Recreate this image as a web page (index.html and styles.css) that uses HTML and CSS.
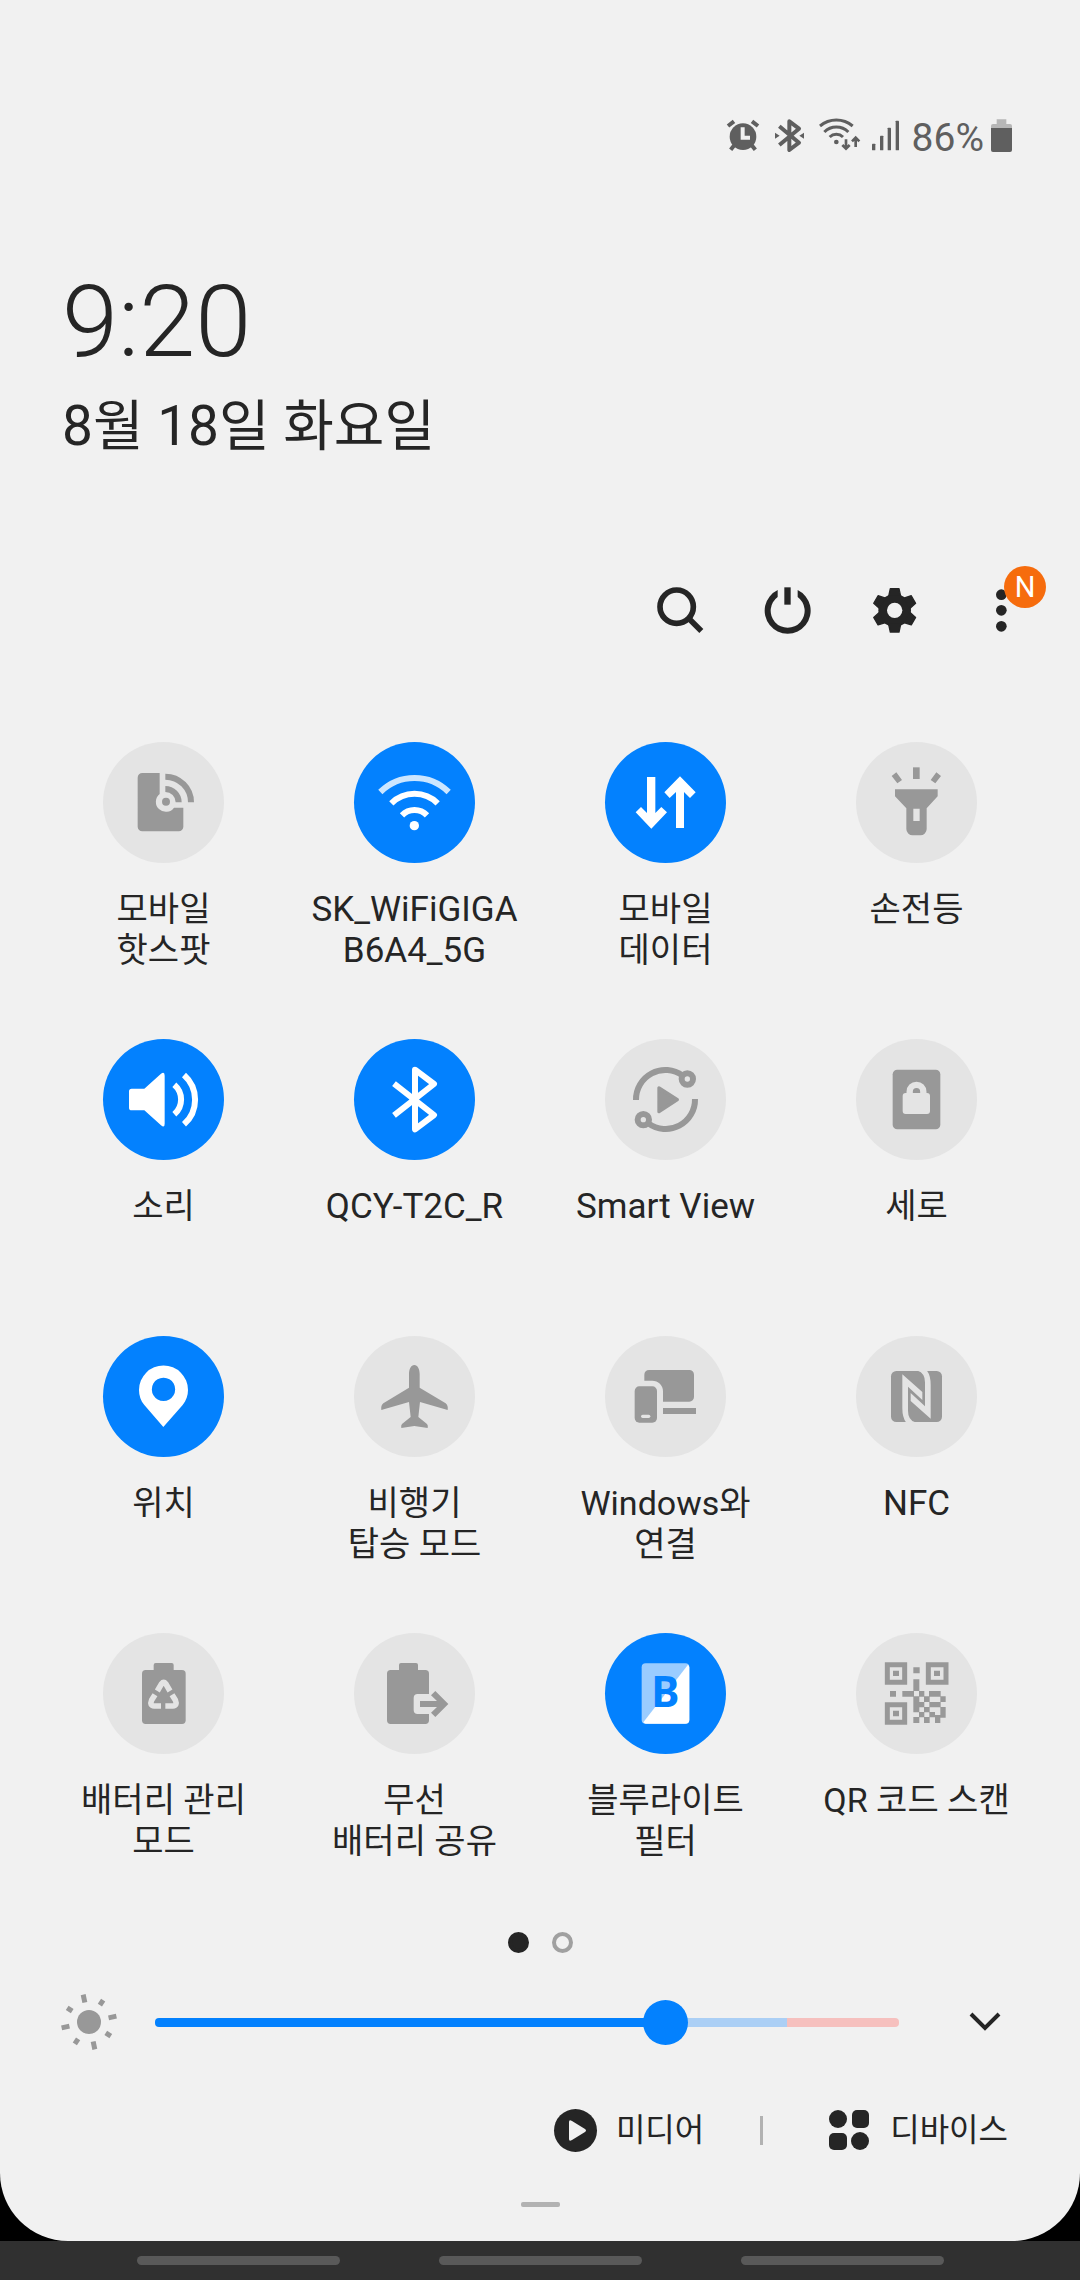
FILE: index.html
```html
<!DOCTYPE html>
<html lang="ko">
<head>
<meta charset="utf-8">
<meta name="viewport" content="width=device-width, initial-scale=1">
<title>빠른 설정</title>
<link rel="stylesheet" href="styles.css">
</head>
<body>
<main class="panel">
  <div class="status">
    <svg class="status-icon" width="34" height="35" viewBox="81 84 102 105" aria-hidden="true">
      <circle cx="129" cy="140" r="40"/>
      <path class="line" stroke-width="12" d="M84 108L102 94M156 94L174 108"/>
      <path class="line" stroke-width="12" d="M104 164L92 179M154 164L166 179"/>
      <path class="cut-line" stroke-width="12" d="M128 112V143H150"/>
    </svg>
    <svg class="status-icon" width="34" height="35" viewBox="219 84 102 105" aria-hidden="true">
      <path class="line" stroke-width="12" stroke-linejoin="round" d="M238 109L297 158L268 180V94L297 116L238 165"/>
      <path d="M225 128L239 137L225 146ZM312 128L298 137L312 146Z"/>
    </svg>
    <svg class="status-icon" width="42" height="35" viewBox="357 84 126 105" aria-hidden="true">
      <circle cx="409" cy="156" r="7"/>
      <path class="line" stroke-width="9" d="M389 141A29 29 0 0 1 429 141M373 126A51 51 0 0 1 445 126M360 108A76 76 0 0 1 458 108"/>
      <path class="line" stroke-width="8" d="M438 148V176M427 165L438 176L449 165M467 171V143M456 154L467 143L478 154"/>
    </svg>
    <svg class="status-icon" width="27" height="35" viewBox="519 84 81 105" aria-hidden="true">
      <rect x="516" y="161" width="10" height="20" rx="2"/>
      <rect x="540" y="137" width="10" height="44" rx="2"/>
      <rect x="563" y="113" width="10" height="68" rx="2"/>
      <rect x="587" y="92" width="10" height="89" rx="2"/>
    </svg>
    <span class="battery-level">86%</span>
    <svg class="battery" width="21" height="35" viewBox="873 84 63 105" aria-hidden="true">
      <path fill="#b7b7b7" d="M890 88H919V102H930Q936 102 936 108V120H873V108Q873 102 879 102H890Z"/>
      <path d="M873 114H936V180Q936 186 930 186H879Q873 186 873 180Z"/>
    </svg>
  </div>

  <header class="clock">
    <time class="time">9:20</time>
    <p class="date">8월 18일 화요일</p>
  </header>

  <div class="toolbar">
    <button class="tool" type="button" aria-label="검색">
      <svg width="48" height="48" viewBox="111 138 144 144">
        <circle class="line" cx="170" cy="200" r="50" stroke-width="17"/>
        <path class="line" stroke-width="17" d="M205 234L244 273"/>
      </svg>
    </button>
    <button class="tool" type="button" aria-label="전원">
      <svg width="48" height="48" viewBox="432 138 144 144">
        <path d="M533 150A69 69 0 1 1 473 150V171A51 51 0 1 0 533 171Z"/>
        <rect x="493" y="142" width="19" height="52"/>
      </svg>
    </button>
    <button class="tool" type="button" aria-label="설정">
      <svg width="48" height="48" viewBox="753 138 144 144">
        <circle cx="824" cy="211" r="49"/>
        <g stroke="currentColor" stroke-width="4" stroke-linejoin="round">
          <path d="M811 146H837L842 169H806ZM811 276H837L842 253H806Z"/>
          <path transform="rotate(60 824 211)" d="M811 146H837L842 169H806ZM811 276H837L842 253H806Z"/>
          <path transform="rotate(120 824 211)" d="M811 146H837L842 169H806ZM811 276H837L842 253H806Z"/>
        </g>
        <circle class="cut" cx="824" cy="211" r="23"/>
      </svg>
    </button>
    <button class="tool" type="button" aria-label="더보기">
      <svg width="48" height="48" viewBox="1074 138 144 144">
        <circle cx="1144" cy="164" r="16"/>
        <circle cx="1144" cy="211" r="16"/>
        <circle cx="1144" cy="259" r="16"/>
      </svg>
      <span class="badge">N</span>
    </button>
  </div>

  <section class="tiles" aria-label="빠른 설정">
    <button class="tile" type="button" aria-pressed="false">
      <svg class="tile-icon" viewBox="129 66 363 363" aria-hidden="true">
        <path d="M247 159H299V222A30 30 0 1 0 342 263H370V320A14 14 0 0 1 356 334H247A14 14 0 0 1 233 320V173A14 14 0 0 1 247 159Z"/>
        <circle cx="318" cy="245" r="12"/>
        <path class="line" stroke-width="18" d="M316 207A40 40 0 0 1 356 247M316 170A77 77 0 0 1 393 247"/>
      </svg>
      <span class="label">모바일<br>핫스팟</span>
    </button>
    <button class="tile" type="button" aria-pressed="true">
      <svg class="tile-icon" viewBox="882 66 363 363" aria-hidden="true">
        <circle cx="1063" cy="317" r="14"/>
        <path class="line" stroke-width="18" d="M1026 286A52 52 0 0 1 1101 286M994 250A98 98 0 0 1 1133 250"/>
        <path class="line" stroke-width="18" opacity=".8" d="M961 216A146 146 0 0 1 1166 216"/>
      </svg>
      <span class="label latin">SK_WiFiGIGA<br>B6A4_5G</span>
    </button>
    <button class="tile" type="button" aria-pressed="true">
      <svg class="tile-icon" viewBox="135 66 363 363" aria-hidden="true">
        <path d="M261 171H286V279L304 261L321 277L274 326L227 277L243 261L261 279Z"/>
        <path d="M348 324H372V216L390 234L407 217L360 169L313 217L329 234L348 216Z"/>
      </svg>
      <span class="label">모바일<br>데이터</span>
    </button>
    <button class="tile" type="button" aria-pressed="false">
      <svg class="tile-icon" viewBox="888 66 363 363" aria-hidden="true">
        <rect x="1059" y="142" width="20" height="35"/>
        <path d="M995 168L1009 157L1026 180L1012 190ZM1129 157L1143 168L1126 190L1112 180Z"/>
        <path fill-rule="evenodd" d="M1005 208H1133V229L1100 265V327A19 19 0 0 1 1081 346H1058A19 19 0 0 1 1039 327V265L1005 229ZM1060 266V303H1079V266Z"/>
      </svg>
      <span class="label">손전등</span>
    </button>

    <button class="tile" type="button" aria-pressed="true">
      <svg class="tile-icon" viewBox="129 57 363 363" aria-hidden="true">
        <path d="M215 206H253L303 161Q314 153 314 167V311Q314 325 303 316L253 271H215Q207 271 207 263V214Q207 206 215 206Z"/>
        <path class="line" stroke-width="18" d="M343 194A59 59 0 0 1 343 283M372 165A99 99 0 0 1 372 313"/>
      </svg>
      <span class="label">소리</span>
    </button>
    <button class="tile" type="button" aria-pressed="true">
      <svg class="tile-icon" viewBox="882 57 363 363" aria-hidden="true">
        <path class="line" stroke-width="18" stroke-linejoin="round" d="M1002 191L1122 285L1065 328V149L1122 192L1002 286"/>
      </svg>
      <span class="label latin">QCY-T2C_R</span>
    </button>
    <button class="tile" type="button" aria-pressed="false">
      <svg class="tile-icon" viewBox="135 57 363 363" aria-hidden="true">
        <path class="line" stroke-width="18" d="M228 240A88 88 0 0 1 368 167M405 237A88 88 0 0 1 265 310"/>
        <circle class="line" cx="382" cy="177" r="17" stroke-width="18"/>
        <circle class="line" cx="250" cy="299" r="17" stroke-width="18"/>
        <path stroke="currentColor" stroke-width="10" stroke-linejoin="round" d="M297 204V275L352 239Z"/>
      </svg>
      <span class="label latin">Smart View</span>
    </button>
    <button class="tile" type="button" aria-pressed="false">
      <svg class="tile-icon" viewBox="888 57 363 363" aria-hidden="true">
        <rect x="998" y="149" width="143" height="179" rx="14"/>
        <rect class="cut" x="1028" y="219" width="82" height="63" rx="9"/>
        <path class="cut-line" stroke-width="19" d="M1049 222V215A20 20 0 0 1 1090 215V222"/>
      </svg>
      <span class="label">세로</span>
    </button>

    <button class="tile" type="button" aria-pressed="true">
      <svg class="tile-icon" viewBox="129 48 363 363" aria-hidden="true">
        <path fill-rule="evenodd" d="M310 321L253 255C242 243 237 226 237 210A73 73 0 0 1 384 210C384 226 379 242 368 255ZM310 173A35 35 0 1 0 311 173Z"/>
      </svg>
      <span class="label">위치</span>
    </button>
    <button class="tile" type="button" aria-pressed="false">
      <svg class="tile-icon" viewBox="882 48 363 363" aria-hidden="true">
        <path d="M1063 135C1073 135 1079 148 1079 162V203L1157 250Q1165 256 1163 270L1080 246L1075 291L1101 312Q1105 316 1103 324L1063 318L1024 324Q1022 316 1026 312L1052 291L1047 246L964 270Q962 256 970 250L1047 203V162C1047 148 1053 135 1063 135Z"/>
      </svg>
      <span class="label">비행기<br>탑승 모드</span>
    </button>
    <button class="tile" type="button" aria-pressed="false">
      <svg class="tile-icon" viewBox="135 48 363 363" aria-hidden="true">
        <path d="M267 150H388A14 14 0 0 1 402 164V231A14 14 0 0 1 388 245H309V214A32 32 0 0 0 277 182H253V164A14 14 0 0 1 267 150Z"/>
        <rect x="309" y="264" width="99" height="18"/>
        <rect x="224" y="199" width="67" height="109" rx="14"/>
        <rect class="cut" x="243" y="284" width="28" height="10" rx="5"/>
      </svg>
      <span class="label">Windows와<br>연결</span>
    </button>
    <button class="tile" type="button" aria-pressed="false">
      <svg class="tile-icon" viewBox="888 48 363 363" aria-hidden="true">
        <rect x="993" y="153" width="153" height="153" rx="16"/>
        <path class="cut" d="M1027 163L1087 216V240L1044 200V272Q1044 300 1066 307H1038Q1027 292 1027 265Z"/>
        <path class="cut" transform="rotate(180 1069.5 229.5)" d="M1027 163L1087 216V240L1044 200V272Q1044 300 1066 307H1038Q1027 292 1027 265Z"/>
      </svg>
      <span class="label latin">NFC</span>
    </button>

    <button class="tile" type="button" aria-pressed="false">
      <svg class="tile-icon" viewBox="129 39 363 363" aria-hidden="true">
        <rect x="281" y="129" width="60" height="40" rx="6"/>
        <rect x="246" y="150" width="131" height="162" rx="11"/>
        <path class="cut-line" stroke-width="17" d="M292 213L305 191Q311 183 317 191L330 213M285 224L275 240Q268 257 283 258H303M336 224L346 240Q353 257 338 258H316"/>
      </svg>
      <span class="label">배터리 관리<br>모드</span>
    </button>
    <button class="tile" type="button" aria-pressed="false">
      <svg class="tile-icon" viewBox="882 39 363 363" aria-hidden="true">
        <rect x="1017" y="129" width="57" height="40" rx="6"/>
        <path d="M992 150H1096A11 11 0 0 1 1107 161V222H1073A12 12 0 0 0 1061 234V270A12 12 0 0 0 1073 282H1107V301A11 11 0 0 1 1096 312H992A11 11 0 0 1 981 301V161A11 11 0 0 1 992 150Z"/>
        <path d="M1080 243H1131L1113 226L1126 213L1165 252L1126 291L1113 278L1131 261H1080Z"/>
      </svg>
      <span class="label">무선<br>배터리 공유</span>
    </button>
    <button class="tile" type="button" aria-pressed="true">
      <svg class="tile-icon" viewBox="135 39 363 363" aria-hidden="true">
        <rect x="245" y="130" width="143" height="181" rx="12" opacity=".6"/>
        <path d="M384 134Q388 138 388 143V299A12 12 0 0 1 376 311H257Q253 311 250 307Z"/>
        <text class="filter-letter" x="274" y="262">B</text>
      </svg>
      <span class="label">블루라이트<br>필터</span>
    </button>
    <button class="tile" type="button" aria-pressed="false">
      <svg class="tile-icon" viewBox="888 39 363 363" aria-hidden="true">
        <path class="line" stroke-width="15" d="M982 134H1034V187H982ZM1105 134H1158V187H1105ZM982 254H1034V307H982Z"/>
        <path d="M999 152H1017V168H999ZM1122 152H1140V168H1122ZM999 272H1017V289H999ZM1060 142H1079V160H1060ZM1060 178H1078V213H1060ZM990 213H1008V230H990ZM1027 213H1062V230H1027ZM1077 213H1093V230H1077ZM1107 213H1142V230H1107ZM1060 229H1078V277H1060ZM1092 229H1109V246H1092ZM1141 229H1157V246H1141ZM1077 246H1093V262H1077ZM1108 246H1142V262H1108ZM1092 261H1109V277H1092ZM1141 261H1157V293H1141ZM1077 276H1093V292H1077ZM1108 276H1125V292H1108ZM1125 285H1141V309H1125ZM1060 291H1078V309H1060ZM1092 291H1109V309H1092Z"/>
      </svg>
      <span class="label">QR 코드 스캔</span>
    </button>
  </section>

  <div class="pages">
    <span class="page current"></span>
    <span class="page"></span>
  </div>

  <div class="brightness">
    <svg class="sun" width="56" height="56" viewBox="-28 -28 56 56" aria-hidden="true">
      <circle r="12"/>
      <g class="line" stroke-width="5" transform="rotate(-12)">
        <path d="M0 -20V-28M0 20V28M-20 0H-28M20 0H28"/>
        <path transform="rotate(45)" d="M0 -20V-26M0 20V26M-20 0H-26M20 0H26"/>
      </g>
    </svg>
    <input class="slider" type="range" min="0" max="1000" value="698" aria-label="밝기">
    <button class="expand" type="button" aria-label="펼치기">
      <svg width="32" height="20" viewBox="0 0 32 20">
        <path class="line" stroke-width="4" d="M2 2L16 16L30 2"/>
      </svg>
    </button>
  </div>

  <footer class="links">
    <button class="link" type="button">
      <svg width="43" height="43" viewBox="0 0 43 43" aria-hidden="true">
        <circle cx="21.5" cy="21.5" r="21.5"/>
        <path class="cut" d="M15 13Q15 10 18 12L31 20Q33 21.500 31 23L18 31Q15 33 15 30Z"/>
      </svg>
      미디어
    </button>
    <span class="divider"></span>
    <button class="link" type="button">
      <svg width="43" height="43" viewBox="0 0 43 43" aria-hidden="true">
        <circle cx="10" cy="10" r="9"/>
        <rect x="24" y="1" width="17" height="18" rx="5"/>
        <rect x="1" y="24" width="18" height="17" rx="5"/>
        <circle cx="32" cy="32" r="9"/>
      </svg>
      디바이스
    </button>
  </footer>

  <div class="handle"></div>
</main>

<nav class="gestures" aria-label="탐색">
  <span class="gesture"></span>
  <span class="gesture"></span>
  <span class="gesture"></span>
</nav>
</body>
</html>
```

FILE: styles.css
```css
* {
  box-sizing: border-box;
}

:root {
  --surface: #f1f1f1;
  --ink: #252525;
  --muted: #989898;
  --accent: #0381fe;
  --tile-off: #e4e4e4;
}

body {
  margin: 0;
  min-height: 100vh;
  display: flex;
  flex-direction: column;
  background: #000;
  color: var(--ink);
  font-family: Roboto, "Noto Sans CJK KR", sans-serif;
  font-size: 34px;
  line-height: 41px;
}

button {
  margin: 0;
  padding: 0;
  border: 0;
  background: none;
  color: inherit;
  font: inherit;
}

svg {
  display: block;
  flex: none;
  overflow: visible;
  fill: currentColor;
}

.line {
  fill: none;
  stroke: currentColor;
}

.cut {
  fill: var(--cut, var(--surface));
}

.cut-line {
  fill: none;
  stroke: var(--cut, var(--surface));
}

.panel {
  flex: 1;
  padding-top: 118px;
  background: var(--surface);
  border-radius: 0 0 68px 68px;
}

/* Status bar */
.status {
  display: flex;
  justify-content: flex-end;
  gap: 12px;
  padding-right: 68px;
  color: #5f5f5f;
}

.battery-level {
  font-size: 39px;
  line-height: 40px;
}

.battery {
  margin-left: -5px;
}

/* Clock */
.clock {
  margin-top: 114px;
  padding: 0 62px;
}

.time {
  display: block;
  font-size: 101px;
  font-weight: 300;
  line-height: 100px;
}

.date {
  margin: 24px 0 0;
  font-size: 55px;
  line-height: 60px;
}

/* Toolbar */
.toolbar {
  display: flex;
  justify-content: flex-end;
  gap: 59px;
  margin-top: 130px;
  padding-right: 54px;
}

.tool {
  position: relative;
}

.badge {
  position: absolute;
  top: -20px;
  left: 26px;
  width: 42px;
  height: 42px;
  border-radius: 50%;
  background: #f66c0d;
  color: #fff;
  font-size: 29px;
  line-height: 42px;
  text-align: center;
}

/* Quick setting tiles */
.tiles {
  display: grid;
  grid-template-columns: repeat(4, 1fr);
  row-gap: 68px;
  margin-top: 108px;
  padding: 0 38px;
}

.tile {
  display: flex;
  flex-direction: column;
  align-items: center;
  gap: 26px;
  --cut: var(--tile-off);
}

.tile-icon {
  width: 121px;
  height: 121px;
  border-radius: 50%;
  background: var(--tile-off);
  color: var(--muted);
}

.tile[aria-pressed="true"] .tile-icon {
  background: var(--accent);
  color: #fff;
}

.label {
  min-height: 82px;
  white-space: nowrap;
}

.latin {
  font-size: 35px;
}

.filter-letter {
  fill: var(--accent);
  font-family: "Noto Sans", sans-serif;
  font-size: 127px;
  font-weight: 700;
}

/* Page dots */
.pages {
  display: flex;
  justify-content: center;
  gap: 23px;
  margin-top: 70px;
}

.page {
  width: 21px;
  height: 21px;
  border: 4px solid #a0a0a0;
  border-radius: 50%;
}

.page.current {
  border-color: var(--ink);
  background: var(--ink);
}

/* Brightness */
.brightness {
  display: flex;
  align-items: center;
  margin-top: 41px;
  padding: 0 79px 0 61px;
}

.sun {
  color: var(--muted);
}

.slider {
  flex: 1;
  min-width: 0;
  height: 45px;
  margin: 0 70px 0 38px;
  appearance: none;
  background: none;
}

.slider::-webkit-slider-runnable-track {
  height: 9px;
  border-radius: 4px;
  background: linear-gradient(to right, var(--accent) 68%, #abcff5 68% 85%, #f6c0be 85%);
}

.slider::-webkit-slider-thumb {
  appearance: none;
  width: 45px;
  height: 45px;
  margin-top: -18px;
  border-radius: 50%;
  background: var(--accent);
}

/* Footer */
.links {
  display: flex;
  justify-content: flex-end;
  align-items: center;
  margin-top: 59px;
  padding-right: 72px;
}

.link {
  display: flex;
  align-items: center;
  gap: 19px;
  font-size: 32px;
}

.divider {
  width: 3px;
  height: 29px;
  margin: 0 65px 0 56px;
  background: #b2b2b2;
}

.handle {
  width: 39px;
  height: 5px;
  margin: 50px auto 34px;
  border-radius: 2px;
  background: #b2b2b2;
}

/* Navigation bar */
.gestures {
  display: flex;
  justify-content: center;
  gap: 99px;
  padding: 15px 0;
  background: #303030;
}

.gesture {
  width: 203px;
  height: 9px;
  border-radius: 5px;
  background: #595959;
}
```
